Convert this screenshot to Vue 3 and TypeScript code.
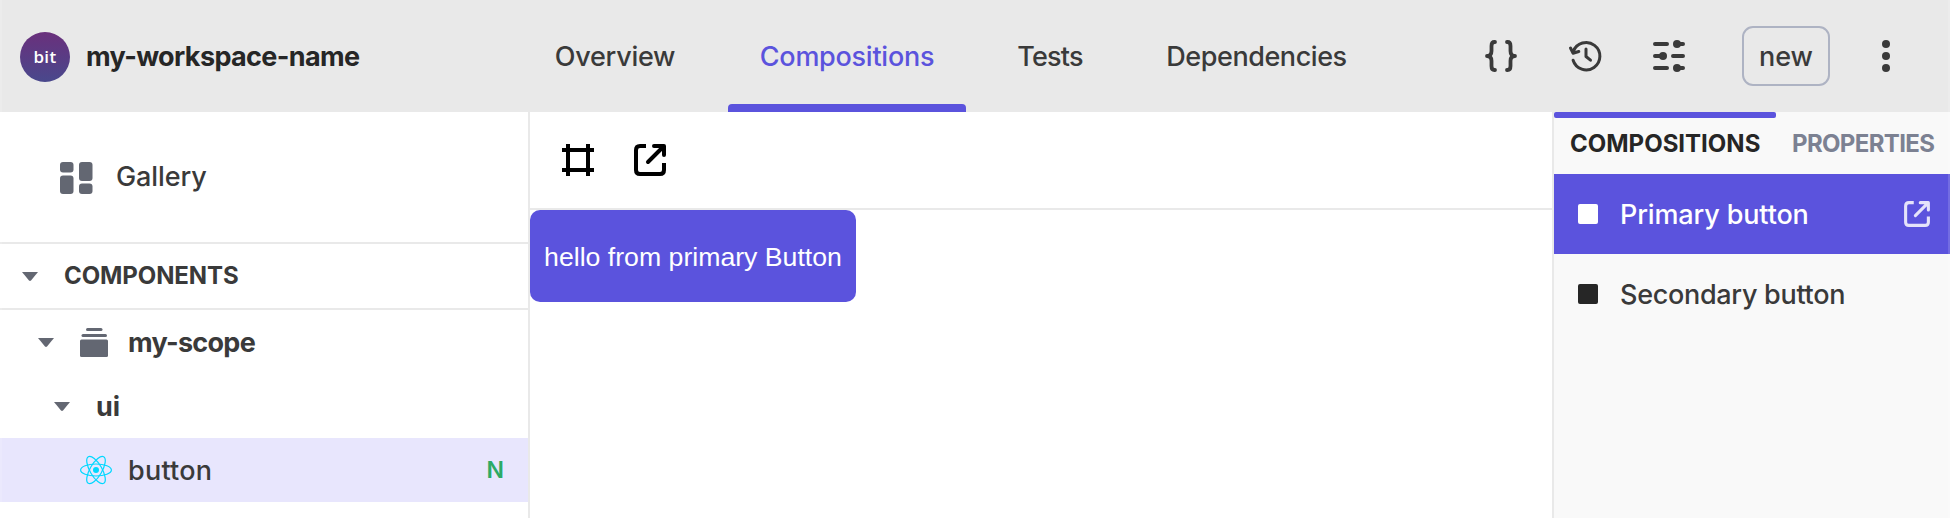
<script setup lang="ts">
interface Tab { label: string; key: string; active?: boolean }

const tabs: Tab[] = [
  { label: 'Overview', key: 'overview' },
  { label: 'Compositions', key: 'compositions', active: true },
  { label: 'Tests', key: 'tests' },
  { label: 'Dependencies', key: 'dependencies' },
]

const compositions = [
  { name: 'Primary button', key: 'primary', active: true },
  { name: 'Secondary button', key: 'secondary', active: false },
]
</script>

<template>
  <div class="workspace">
    <header class="topbar">
      <div class="brand">
        <span class="logo">bit</span>
        <span class="brand-name">my-workspace-name</span>
      </div>
      <nav class="tabs">
        <a v-for="tab in tabs" :key="tab.key" class="tab" :class="[tab.key, { active: tab.active }]">{{ tab.label }}</a>
      </nav>
      <div class="actions">
        <svg class="icon braces" viewBox="0 0 32 32">
          <path d="M10 2H9.500Q6.500 2 6.500 6V11Q6.500 16 2 16Q6.500 16 6.500 21V26Q6.500 30 9.500 30H10M22 2H22.500Q25.500 2 25.500 6V11Q25.500 16 30 16Q25.500 16 25.500 21V26Q25.500 30 22.500 30H22" />
        </svg>
        <svg class="icon history" viewBox="0 0 32 32">
          <path d="M4.300 11.500A13.700 13.700 0 1 1 4.100 20.300M1.500 8L4 13.200L9.800 11.500M17 9V16.500L21.500 20.200" />
        </svg>
        <svg class="icon sliders" viewBox="0 0 32 32">
          <path d="M2 4H14M24 4H30M2 16H10M20 16H30M2 28H14M24 28H30" />
          <circle cx="24" cy="4" r="4" /><circle cx="10" cy="16" r="4" /><circle cx="24" cy="28" r="4" />
        </svg>
        <button class="version">new</button>
        <svg class="dots" viewBox="0 0 8 32">
          <circle cx="4" cy="4" r="4" /><circle cx="4" cy="16" r="4" /><circle cx="4" cy="28" r="4" />
        </svg>
      </div>
    </header>

    <div class="body">
      <aside class="sidebar">
        <a class="gallery">
          <svg class="gallery-icon" viewBox="0 0 33 32">
            <rect width="13.500" height="10.500" rx="3" /><rect y="13.500" width="13.500" height="18.500" rx="3" />
            <rect x="19" width="13.500" height="19" rx="3" /><rect x="19" y="21.500" width="13.500" height="10.500" rx="3" />
          </svg>
          <span>Gallery</span>
        </a>
        <div class="section">
          <svg class="caret" viewBox="0 0 16 9"><path d="M0 0H16L9 8.500Q8 9.300 7 8.500Z" /></svg>
          <span>COMPONENTS</span>
        </div>
        <div class="node scope">
          <svg class="caret" viewBox="0 0 16 9"><path d="M0 0H16L9 8.500Q8 9.300 7 8.500Z" /></svg>
          <svg class="scope-icon" viewBox="0 0 28 29">
            <rect x="6" width="16.500" height="3" rx="1.500" /><rect x="1.500" y="6" width="25.500" height="3" rx="1.500" />
            <rect y="11.500" width="28" height="17.500" rx="1.500" />
          </svg>
          <span class="bold">my-scope</span>
        </div>
        <div class="node namespace">
          <svg class="caret" viewBox="0 0 16 9"><path d="M0 0H16L9 8.500Q8 9.300 7 8.500Z" /></svg>
          <span class="bold">ui</span>
        </div>
        <div class="node component">
          <svg class="react" viewBox="-16 -16 32 32">
            <circle r="3" />
            <ellipse rx="15.400" ry="6" />
            <ellipse rx="15.400" ry="6" transform="rotate(60)" />
            <ellipse rx="15.400" ry="6" transform="rotate(120)" />
          </svg>
          <span class="component-name">button</span>
          <span class="status">N</span>
        </div>
      </aside>

      <main class="stage">
        <div class="toolbar">
          <svg class="tool" viewBox="0 0 32 32"><path d="M0 6H32M0 26H32M6 0V32M26 0V32" /></svg>
          <svg class="tool" viewBox="0 0 32 32">
            <path d="M12 2H6Q2 2 2 6V26Q2 30 6 30H26Q30 30 30 26V19" />
            <path class="round" d="M20 2H30V11M29 3L14 18" />
          </svg>
        </div>
        <button class="preview">hello from primary Button</button>
      </main>

      <aside class="panel">
        <div class="panel-tabs">
          <span class="panel-tab current">COMPOSITIONS</span>
          <span class="panel-tab other">PROPERTIES</span>
        </div>
        <div v-for="c in compositions" :key="c.key" class="composition" :class="[c.key, { selected: c.active }]">
          <span class="swatch"></span>
          <span class="composition-name">{{ c.name }}</span>
          <svg v-if="c.active" class="open" viewBox="0 0 32 32">
            <path d="M12 2H6Q2 2 2 6V26Q2 30 6 30H26Q30 30 30 26V19" />
            <path class="round" d="M20 2H30V11M29 3L14 18" />
          </svg>
        </div>
      </aside>
    </div>
  </div>
</template>

<style>
body { margin: 0; background: #fff; }
</style>

<style scoped>
* { box-sizing: border-box; }
.workspace {
  position: relative;
  width: 1950px;
  height: 518px;
  overflow: hidden;
  display: flex;
  flex-direction: column;
  background: #fff;
  color: #3a3a3a;
  font: 500 27px/1.2 Inter, "Liberation Sans", sans-serif;
}
.workspace::after {
  content: "";
  position: absolute;
  inset: 0;
  border: solid rgba(255, 255, 255, 0.15);
  border-width: 0 2px;
  pointer-events: none;
}
svg { display: block; flex: none; overflow: visible; }
span, a { white-space: nowrap; }

.topbar { height: 112px; flex: none; display: flex; align-items: center; background: #e9e9e9; }
.brand { width: 522px; padding-left: 20px; display: flex; align-items: center; }
.logo {
  width: 50px; height: 50px; margin-top: 2px; border-radius: 50%;
  background: linear-gradient(#6a307c, #49488c);
  color: #fff; font: 600 17px/50px "Open Sans", sans-serif; letter-spacing: 0.4px; text-align: center;
}
.brand-name { margin-left: 16px; padding-top: 2px; color: #262626; font-weight: 700; letter-spacing: -0.62px; }
.tabs { display: flex; gap: 20px; align-self: stretch; }
.tab { position: relative; display: flex; align-items: center; justify-content: center; padding-top: 2px; }
.tab.overview { width: 186px; letter-spacing: -0.25px; }
.tab.compositions { width: 238px; letter-spacing: -0.26px; }
.tab.tests { width: 128px; letter-spacing: -0.8px; }
.tab.dependencies { width: 244px; padding-left: 1px; letter-spacing: -0.45px; }
.tab.active { color: #5b53dd; }
.tab.active::after {
  content: ""; position: absolute; left: 0; right: 0; bottom: 0; height: 8px;
  border-radius: 4px 4px 0 0; background: #5b53dd;
}
.actions { margin-left: 107px; display: flex; align-items: center; }
.icon { width: 32px; height: 32px; margin-right: 52px; fill: none; stroke: #3a3a3a; stroke-width: 3; stroke-linecap: round; stroke-linejoin: round; }
.braces { stroke-width: 3.800; }
.sliders { stroke-width: 4; margin-right: 57px; }
.sliders circle { fill: #3a3a3a; stroke: none; }
.version {
  width: 88px; height: 60px; padding: 2px 0 0; border: 2px solid #aeb3c3; border-radius: 11px;
  background: transparent; color: #3a3a3a; font: inherit;
}
.dots { width: 8px; height: 32px; margin-left: 52px; fill: #3a3a3a; }

.body { flex: 1; display: flex; min-height: 0; }
.sidebar { width: 530px; border-right: 2px solid #e9e9e9; }
.gallery { height: 132px; padding-left: 60px; display: flex; align-items: center; gap: 23px; border-bottom: 2px solid #e9e9e9; letter-spacing: -0.1px; }
.gallery-icon { width: 33px; height: 32px; margin-top: 2px; fill: #636772; }
.section { height: 66px; padding-left: 22px; display: flex; align-items: center; gap: 26px; border-bottom: 2px solid #e9e9e9; font-size: 24px; font-weight: 700; letter-spacing: -0.1px; }
.caret { width: 16px; height: 9px; fill: #636772; }
.node { height: 64px; display: flex; align-items: center; }
.node span { padding-top: 2px; }
.bold { font-weight: 700; }
.scope { padding-left: 38px; }
.scope-icon { width: 28px; height: 29px; margin: 0 20px 0 26px; fill: #636772; }
.scope .bold { letter-spacing: -0.7px; }
.namespace { padding-left: 54px; }
.namespace .bold { margin-left: 26px; }
.component { padding: 0 24px 0 80px; background: #e8e6fd; }
.react { width: 32px; height: 32px; margin-right: 16px; fill: none; stroke: #00d8ff; stroke-width: 1.200; }
.react circle { fill: #00d8ff; stroke: none; }
.component-name { letter-spacing: 0.25px; }
.status { margin-left: auto; color: #2caa66; font-size: 23px; font-weight: 600; }

.stage { width: 1022px; }
.toolbar { height: 98px; padding-left: 32px; display: flex; align-items: center; gap: 40px; border-bottom: 2px solid #e9e9e9; }
.tool { width: 32px; height: 32px; fill: none; stroke: #000; stroke-width: 4; }
.round { stroke-linecap: round; stroke-linejoin: round; }
.preview {
  display: block; width: 326px; height: 92px; padding: 2px 0 0; border: 0; border-radius: 10px;
  background: #5b53dd; color: #fff; font: 26.670px "Liberation Sans", Arial, sans-serif;
}

.panel { width: 398px; border-left: 2px solid #e9e9e9; background: #f9f9f9; }
.panel-tabs { height: 62px; display: flex; }
.panel-tab { position: relative; display: flex; align-items: center; padding: 2px 0 0 16px; font-size: 24px; font-weight: 700; }
.current { width: 222px; color: #262626; }
.current::before { content: ""; position: absolute; left: 0; right: 0; top: 0; height: 6px; border-radius: 2px; background: #5b53dd; }
.other { color: #7c8192; letter-spacing: -0.65px; }
.composition { height: 80px; padding: 0 20px 0 24px; display: flex; align-items: center; }
.swatch { width: 20px; height: 20px; border-radius: 2px; background: #262626; }
.composition-name { margin-left: 22px; padding-top: 2px; }
.primary .composition-name { letter-spacing: -0.14px; }
.secondary .composition-name { letter-spacing: -0.3px; }
.selected { background: #5b53dd; color: #fff; }
.selected .swatch { background: #fff; }
.open { width: 26px; height: 26px; margin-left: auto; fill: none; stroke: #e5e3fa; stroke-width: 3.800; }
</style>
